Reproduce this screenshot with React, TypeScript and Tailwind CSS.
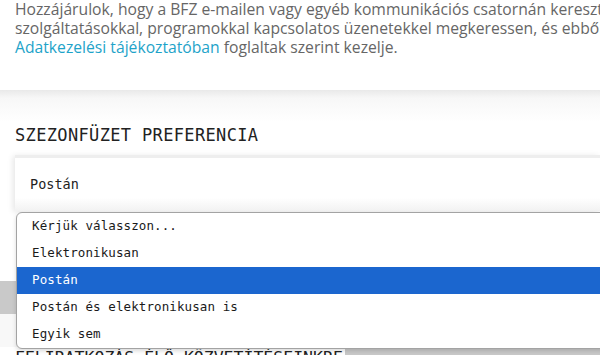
const options = ['Kérjük válasszon...', 'Elektronikusan', 'Postán', 'Postán és elektronikusan is', 'Egyik sem']

const mono = { fontFamily: '"DejaVu Sans Mono", monospace' }

export default function App() {
  const selected = 'Postán'

  return (
    <div className="relative h-[355px] w-[600px] overflow-hidden bg-white">
      {/* consent text */}
      <div
        className="h-[90px] whitespace-nowrap px-[15px] text-[15.7px] leading-[19px] text-[#666]"
        style={{ fontFamily: '"Open Sans", sans-serif' }}
      >
        <div>Hozzájárulok, hogy a BFZ e-mailen vagy egyéb kommunikációs csatornán keresztül</div>
        <div>szolgáltatásokkal, programokkal kapcsolatos üzenetekkel megkeressen, és ebből a</div>
        <div>
          <a className="text-[#1ea3c9]">Adatkezelési tájékoztatóban</a> foglaltak szerint kezelje.
        </div>
      </div>

      {/* preference section */}
      <div className="bg-[linear-gradient(to_bottom,#e9e9e9_0px,#f7f7f7_8px,#ffffff_32px)] pt-[33px]">
        <h2
          className="px-[15px] text-[17px] leading-[24px] tracking-[0.35px] text-[#222]"
          style={mono}
        >
          SZEZONFÜZET PREFERENCIA
        </h2>
        <div className="mt-[8px] pl-[15px]">
          <div
            className="flex h-[56px] items-center border-t-[3px] border-[#eeeeee] bg-[linear-gradient(to_bottom,#ffffff_75%,#f2f2f2)] pl-[15px] text-[13.5px] text-[#222] shadow-[-2px_1px_6px_rgba(0,0,0,0.1)]"
            style={mono}
          >
            {selected}
          </div>
        </div>
        <div className="h-[70px]" />
        <div className="h-[33px] bg-[#c9c9c9]" />
        <div className="h-[33px] bg-[#f8f8f8]" />
        <div className="flex">
          <h2
            className="bg-white pl-[15px] pr-[2px] text-[16.5px] leading-[22px] text-[#222]"
            style={mono}
          >
            FELIRATKOZÁS ÉLŐ KÖZVETÍTÉSEINKRE
          </h2>
          <div className="flex-1 bg-[#c9c9c9]" />
        </div>
      </div>

      {/* open native-like dropdown */}
      <ul
        className="absolute left-[16px] top-[212px] w-[620px] overflow-hidden rounded-l-[6px] border border-[#a3a3a3] bg-white py-0 text-[12.5px] tracking-[0.1px] text-[#1a1a1a] shadow-[0_2px_4px_rgba(0,0,0,0.15)]"
        style={mono}
      >
        {options.map((o) => (
          <li
            key={o}
            className={
              o === selected
                ? 'flex h-[27px] items-center bg-[#1b66cf] pl-[15px] text-white'
                : 'flex h-[27px] items-center pl-[15px]'
            }
          >
            {o}
          </li>
        ))}
      </ul>
    </div>
  )
}
